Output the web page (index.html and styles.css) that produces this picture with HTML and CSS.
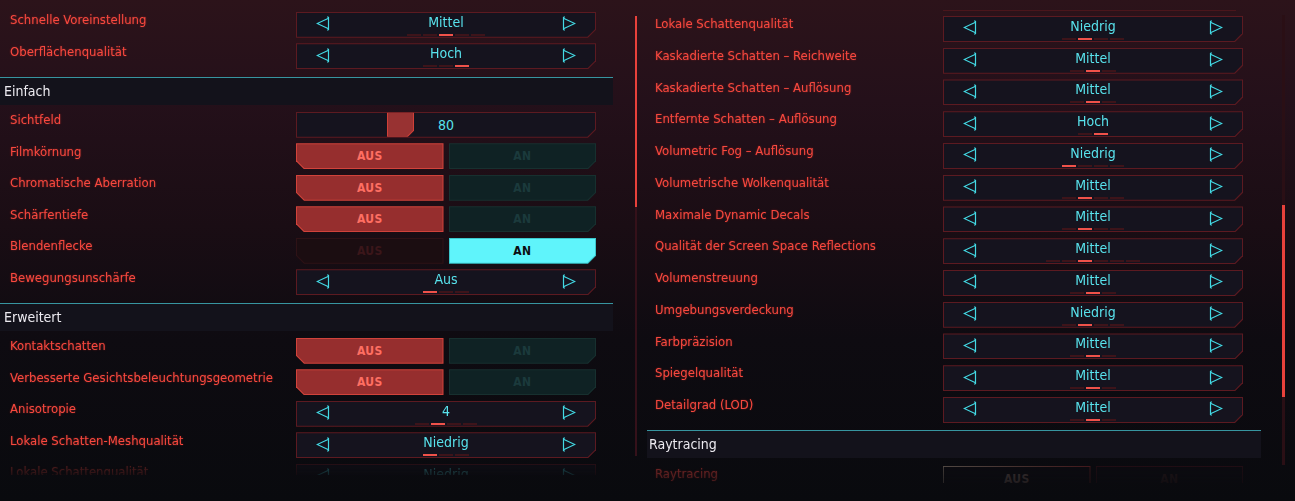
FILE: index.html
```html
<!DOCTYPE html>
<html lang="de">
<head>
<meta charset="utf-8">
<title>Grafik</title>
<link rel="stylesheet" href="styles.css">
</head>
<body>
<svg class="defs" aria-hidden="true">
  <symbol id="al" viewBox="0 0 14 15"><path d="M12.5 1v13M11 1h1.5M11 14h1.5M12.5 2.3L1.2 7.5l11.3 5.2" fill="none" stroke="#43d9e4" stroke-width="1.2"/></symbol>
  <symbol id="ar" viewBox="0 0 14 15"><path d="M1.5 1v13M1.5 1H3M1.5 14H3M1.5 2.3l11.3 5.2L1.5 12.7" fill="none" stroke="#43d9e4" stroke-width="1.2"/></symbol>
</svg>
<div class="screen">
  <section class="panel left">
    <div class="row"><span class="lbl">Schnelle Voreinstellung</span>
      <div class="sel"><div class="fill"><svg class="arr"><use href="#al"/></svg><div class="val"><span>Mittel</span><div class="pips"><i></i><i></i><i class="on"></i><i></i><i></i></div></div><svg class="arr"><use href="#ar"/></svg></div></div></div>
    <div class="row"><span class="lbl">Oberflächenqualität</span>
      <div class="sel"><div class="fill"><svg class="arr"><use href="#al"/></svg><div class="val"><span>Hoch</span><div class="pips"><i></i><i></i><i class="on"></i></div></div><svg class="arr"><use href="#ar"/></svg></div></div></div>
    <div class="head">Einfach</div>
    <div class="row"><span class="lbl">Sichtfeld</span>
      <div class="slider"><div class="fill"><div class="knob"><div class="kfill"></div></div><span class="num">80</span></div></div></div>
    <div class="row"><span class="lbl">Filmkörnung</span>
      <div class="tog"><div class="off on"><div class="f">AUS</div></div><div class="onb"><div class="f">AN</div></div></div></div>
    <div class="row"><span class="lbl">Chromatische Aberration</span>
      <div class="tog"><div class="off on"><div class="f">AUS</div></div><div class="onb"><div class="f">AN</div></div></div></div>
    <div class="row"><span class="lbl">Schärfentiefe</span>
      <div class="tog"><div class="off on"><div class="f">AUS</div></div><div class="onb"><div class="f">AN</div></div></div></div>
    <div class="row"><span class="lbl">Blendenflecke</span>
      <div class="tog"><div class="off"><div class="f">AUS</div></div><div class="onb on"><div class="f">AN</div></div></div></div>
    <div class="row"><span class="lbl">Bewegungsunschärfe</span>
      <div class="sel"><div class="fill"><svg class="arr"><use href="#al"/></svg><div class="val"><span>Aus</span><div class="pips"><i class="on"></i><i></i><i></i></div></div><svg class="arr"><use href="#ar"/></svg></div></div></div>
    <div class="head">Erweitert</div>
    <div class="row"><span class="lbl">Kontaktschatten</span>
      <div class="tog"><div class="off on"><div class="f">AUS</div></div><div class="onb"><div class="f">AN</div></div></div></div>
    <div class="row"><span class="lbl">Verbesserte Gesichtsbeleuchtungsgeometrie</span>
      <div class="tog"><div class="off on"><div class="f">AUS</div></div><div class="onb"><div class="f">AN</div></div></div></div>
    <div class="row"><span class="lbl">Anisotropie</span>
      <div class="sel"><div class="fill"><svg class="arr"><use href="#al"/></svg><div class="val"><span>4</span><div class="pips"><i></i><i class="on"></i><i></i><i></i></div></div><svg class="arr"><use href="#ar"/></svg></div></div></div>
    <div class="row"><span class="lbl">Lokale Schatten-Meshqualität</span>
      <div class="sel"><div class="fill"><svg class="arr"><use href="#al"/></svg><div class="val"><span>Niedrig</span><div class="pips"><i class="on"></i><i></i><i></i></div></div><svg class="arr"><use href="#ar"/></svg></div></div></div>
    <div class="row"><span class="lbl">Lokale Schattenqualität</span>
      <div class="sel"><div class="fill"><svg class="arr"><use href="#al"/></svg><div class="val"><span>Niedrig</span><div class="pips"><i></i><i class="on"></i><i></i><i></i></div></div><svg class="arr"><use href="#ar"/></svg></div></div></div>
  </section>

  <div class="rail"><div class="rail-on"></div></div>

  <section class="panel right">
    <div class="prev"></div>
    <div class="row"><span class="lbl">Lokale Schattenqualität</span>
      <div class="sel"><div class="fill"><svg class="arr"><use href="#al"/></svg><div class="val"><span>Niedrig</span><div class="pips"><i></i><i class="on"></i><i></i><i></i></div></div><svg class="arr"><use href="#ar"/></svg></div></div></div>
    <div class="row"><span class="lbl">Kaskadierte Schatten – Reichweite</span>
      <div class="sel"><div class="fill"><svg class="arr"><use href="#al"/></svg><div class="val"><span>Mittel</span><div class="pips"><i></i><i class="on"></i><i></i></div></div><svg class="arr"><use href="#ar"/></svg></div></div></div>
    <div class="row"><span class="lbl">Kaskadierte Schatten – Auflösung</span>
      <div class="sel"><div class="fill"><svg class="arr"><use href="#al"/></svg><div class="val"><span>Mittel</span><div class="pips"><i></i><i class="on"></i><i></i></div></div><svg class="arr"><use href="#ar"/></svg></div></div></div>
    <div class="row"><span class="lbl">Entfernte Schatten – Auflösung</span>
      <div class="sel"><div class="fill"><svg class="arr"><use href="#al"/></svg><div class="val"><span>Hoch</span><div class="pips"><i></i><i class="on"></i></div></div><svg class="arr"><use href="#ar"/></svg></div></div></div>
    <div class="row"><span class="lbl">Volumetric Fog – Auflösung</span>
      <div class="sel"><div class="fill"><svg class="arr"><use href="#al"/></svg><div class="val"><span>Niedrig</span><div class="pips"><i class="on"></i><i></i><i></i><i></i></div></div><svg class="arr"><use href="#ar"/></svg></div></div></div>
    <div class="row"><span class="lbl">Volumetrische Wolkenqualität</span>
      <div class="sel"><div class="fill"><svg class="arr"><use href="#al"/></svg><div class="val"><span>Mittel</span><div class="pips"><i></i><i class="on"></i><i></i><i></i></div></div><svg class="arr"><use href="#ar"/></svg></div></div></div>
    <div class="row"><span class="lbl">Maximale Dynamic Decals</span>
      <div class="sel"><div class="fill"><svg class="arr"><use href="#al"/></svg><div class="val"><span>Mittel</span><div class="pips"><i></i><i class="on"></i><i></i><i></i></div></div><svg class="arr"><use href="#ar"/></svg></div></div></div>
    <div class="row"><span class="lbl">Qualität der Screen Space Reflections</span>
      <div class="sel"><div class="fill"><svg class="arr"><use href="#al"/></svg><div class="val"><span>Mittel</span><div class="pips"><i></i><i></i><i class="on"></i><i></i><i></i><i></i></div></div><svg class="arr"><use href="#ar"/></svg></div></div></div>
    <div class="row"><span class="lbl">Volumenstreuung</span>
      <div class="sel"><div class="fill"><svg class="arr"><use href="#al"/></svg><div class="val"><span>Mittel</span><div class="pips"><i></i><i class="on"></i><i></i></div></div><svg class="arr"><use href="#ar"/></svg></div></div></div>
    <div class="row"><span class="lbl">Umgebungsverdeckung</span>
      <div class="sel"><div class="fill"><svg class="arr"><use href="#al"/></svg><div class="val"><span>Niedrig</span><div class="pips"><i></i><i class="on"></i><i></i><i></i></div></div><svg class="arr"><use href="#ar"/></svg></div></div></div>
    <div class="row"><span class="lbl">Farbpräzision</span>
      <div class="sel"><div class="fill"><svg class="arr"><use href="#al"/></svg><div class="val"><span>Mittel</span><div class="pips"><i></i><i class="on"></i><i></i></div></div><svg class="arr"><use href="#ar"/></svg></div></div></div>
    <div class="row"><span class="lbl">Spiegelqualität</span>
      <div class="sel"><div class="fill"><svg class="arr"><use href="#al"/></svg><div class="val"><span>Mittel</span><div class="pips"><i></i><i class="on"></i><i></i></div></div><svg class="arr"><use href="#ar"/></svg></div></div></div>
    <div class="row"><span class="lbl">Detailgrad (LOD)</span>
      <div class="sel"><div class="fill"><svg class="arr"><use href="#al"/></svg><div class="val"><span>Mittel</span><div class="pips"><i></i><i class="on"></i><i></i></div></div><svg class="arr"><use href="#ar"/></svg></div></div></div>
    <div class="head">Raytracing</div>
    <div class="row"><span class="lbl">Raytracing</span>
      <div class="tog"><div class="off grey"><div class="f">AUS</div></div><div class="onb dim"><div class="f">AN</div></div></div></div>
  </section>

  <div class="scroll"><div class="thumb"></div></div>
</div>
</body>
</html>
```

FILE: styles.css
```css
* { box-sizing: border-box; }
html, body {
  margin: 0;
  width: 1295px;
  height: 501px;
  overflow: hidden;
}
body {
  background: linear-gradient(180deg, #2c131a 0%, #24101a 20%, #1a0d14 45%, #0e0b11 68%, #090a0e 100%);
  font-family: "Liberation Sans Narrow", "DejaVu Sans Condensed", "Liberation Sans", sans-serif;
  color: #f2453e;
}
.defs { position: absolute; width: 0; height: 0; }

.screen { display: flex; height: 501px; }

.panel { width: 614px; overflow: hidden; flex: none; }
.left {
  width: 613px;
  height: 475px;
  padding-top: 9px;
  -webkit-mask-image: linear-gradient(180deg, #000 0, #000 458px, rgba(0,0,0,.35) 463px, rgba(0,0,0,.12) 475px);
  mask-image: linear-gradient(180deg, #000 0, #000 458px, rgba(0,0,0,.35) 463px, rgba(0,0,0,.12) 475px);
}
.right {
  margin-left: 10px;
  height: 483px;
  padding-top: 10px;
  -webkit-mask-image: linear-gradient(180deg, #000 0, #000 464px, rgba(0,0,0,.55) 468px, rgba(0,0,0,.3) 483px);
  mask-image: linear-gradient(180deg, #000 0, #000 464px, rgba(0,0,0,.55) 468px, rgba(0,0,0,.3) 483px);
}
.prev {
  height: 1px;
  width: 293px;
  margin-left: 296px;
  margin-bottom: 2px;
  background: #4a161c;
}

.row {
  display: flex;
  align-items: center;
  height: 31.5px;
  padding-left: 10px;
}
.right .row { height: 31.75px; padding-left: 8px; }
.lbl {
  flex: 0 1 auto;
  min-width: 0;
  align-self: flex-start;
  padding-top: 2px;
  font-size: 13px;
  line-height: 18px;
  color: #f8493f;
  text-shadow: 0 0 2px rgba(255, 60, 50, .45);
  white-space: nowrap;
}
.right .row:last-child .lbl { color: #c23a36; }

.head {
  margin: 4.5px 0;
  height: 28px;
  border-top: 1px solid #3795a0;
  background: #13121b;
  color: #eceaf0;
  font-size: 14px;
  line-height: 26px;
  padding-left: 4px;
}
.right .head { padding-left: 2px; }

/* selector */
.sel, .slider {
  flex: none;
  margin-left: auto;
  margin-right: 17px;
  width: 300px;
  height: 26px;
  padding: 1px;
  background: #5c1a21;
  clip-path: polygon(0 0, 100% 0, 100% calc(100% - 8px), calc(100% - 8px) 100%, 0 100%);
}
.right .sel { margin-right: 18px; }
.fill {
  height: 100%;
  background: #15131e;
  clip-path: polygon(0 0, 100% 0, 100% calc(100% - 7.6px), calc(100% - 7.6px) 100%, 0 100%);
  display: grid;
  grid-template-columns: 14px 1fr 14px;
  align-items: center;
  padding: 0 19px;
}
.arr { width: 14px; height: 15px; display: block; margin-top: -2px; }
.val {
  display: flex;
  flex-direction: column;
  align-items: center;
  align-self: start;
  padding-top: 1px;
}
.val span {
  font-size: 14px;
  line-height: 17px;
  color: #58e2ec;
}
.pips { display: flex; gap: 2px; margin-top: 3px; }
.pips i { width: 14px; height: 2px; background: #3d141a; }
.pips i.on { background: #f0524a; }

/* slider */
.slider .fill { display: flex; justify-content: center; position: relative; padding: 0; }
.num { color: #58e2ec; font-size: 14px; line-height: 24px; }
.knob {
  position: absolute;
  left: 90px;
  top: -1px;
  width: 27px;
  height: 26px;
  padding: 1px;
  background: #cf4038;
  clip-path: polygon(0 0, 100% 0, 100% calc(100% - 7px), calc(100% - 7px) 100%, 0 100%);
}
.kfill {
  height: 100%;
  background: #983232;
  clip-path: polygon(0 0, 100% 0, 100% calc(100% - 6.6px), calc(100% - 6.6px) 100%, 0 100%);
}

/* toggles */
.tog {
  flex: none;
  margin-left: auto;
  margin-right: 17px;
  width: 300px;
  height: 26px;
  display: flex;
  gap: 5px;
}
.right .tog { margin-right: 18px; }
.tog > div { flex: 1 1 0; height: 100%; padding: 1px; }
.tog .f {
  height: 100%;
  display: flex;
  align-items: center;
  justify-content: center;
  font-size: 12px;
  font-weight: 700;
  letter-spacing: .3px;
}
.off { clip-path: polygon(0 0, 100% 0, 100% 100%, 8px 100%, 0 calc(100% - 8px)); background: #2e1216; }
.off .f { clip-path: polygon(0 0, 100% 0, 100% 100%, 7.6px 100%, 0 calc(100% - 7.6px)); background: #1b0d11; color: #3b161a; }
.off.on { background: #d1433b; }
.off.on .f { background: #962e2e; color: #ff6e62; }
.onb { clip-path: polygon(0 0, 100% 0, 100% calc(100% - 8px), calc(100% - 8px) 100%, 0 100%); background: #17302f; }
.onb .f { clip-path: polygon(0 0, 100% 0, 100% calc(100% - 7.6px), calc(100% - 7.6px) 100%, 0 100%); background: #0f2224; color: #1b3a3c; }
.onb.on { background: #3cc6cc; }
.onb.on .f { background: #5ff4fb; color: #0b0c10; }
.off.grey { background: linear-gradient(90deg, #6d6158, #5a3a36 60%, #5a1f22); }
.off.grey .f { background: #0d0c11; color: #5b4b48; }
.onb.dim { background: #2a1016; }
.onb.dim .f { background: #0d0c11; color: #2a1a1c; }

/* rails */
.rail {
  flex: none;
  margin-left: 22px;
  margin-top: 16px;
  width: 2px;
  height: 440px;
  background: #35111a;
}
.rail-on { height: 191px; background: #e8413b; }

.scroll {
  flex: none;
  margin-left: 21px;
  margin-top: 15px;
  width: 3px;
  height: 450px;
  background: #2a0f15;
}
.thumb { margin-top: 190px; height: 192px; background: #e8413b; }
```
